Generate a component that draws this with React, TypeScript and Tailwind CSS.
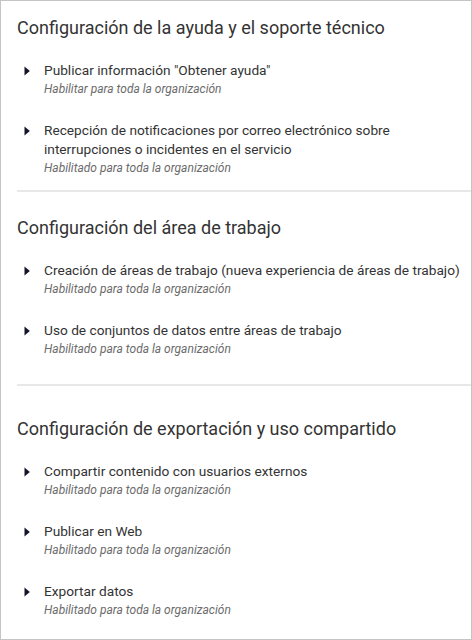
import React from 'react'

type Setting = {
  title: string
  status: string
}

type Section = {
  heading: string
  items: Setting[]
  className: string
}

const ENABLED = 'Habilitado para toda la organización'

const SECTIONS: Section[] = [
  {
    heading: 'Configuración de la ayuda y el soporte técnico',
    className: 'pt-[15px] pb-[12px]',
    items: [
      { title: 'Publicar información "Obtener ayuda"', status: 'Habilitar para toda la organización' },
      {
        title: 'Recepción de notificaciones por correo electrónico sobre interrupciones o incidentes en el servicio',
        status: ENABLED,
      },
    ],
  },
  {
    heading: 'Configuración del área de trabajo',
    className: 'pt-[24px] pb-[25px]',
    items: [
      { title: 'Creación de áreas de trabajo (nueva experiencia de áreas de trabajo)', status: ENABLED },
      { title: 'Uso de conjuntos de datos entre áreas de trabajo', status: ENABLED },
    ],
  },
  {
    heading: 'Configuración de exportación y uso compartido',
    className: 'pt-[31px] pb-[16px]',
    items: [
      { title: 'Compartir contenido con usuarios externos', status: ENABLED },
      { title: 'Publicar en Web', status: ENABLED },
      { title: 'Exportar datos', status: ENABLED },
    ],
  },
]

function Caret() {
  return (
    <svg width="6" height="10" viewBox="0 0 6 10" className="mt-[5px] flex-shrink-0">
      <path d="M0.5 0.5 L5.8 5 L0.5 9.5 Z" fill="#14142a" />
    </svg>
  )
}

function SettingRow({ item }: { item: Setting }) {
  return (
    <li className="flex gap-[14px] pl-[7px]">
      <Caret />
      <div className="min-w-0">
        <div className="text-[13.7px] leading-[19px] text-[#333]">{item.title}</div>
        <div className="text-[12px] leading-[19px] italic text-[#6b6b6b]">{item.status}</div>
      </div>
    </li>
  )
}

export default function App() {
  return (
    <div
      className="w-[472px] h-[640px] bg-white border border-[#c4c4c4] overflow-hidden"
      style={{ fontFamily: 'Roboto, "Open Sans", sans-serif' }}
    >
      <div className="pl-[16px]">
        {SECTIONS.map((s, i) => (
          <section key={s.heading} className={i < SECTIONS.length - 1 ? 'border-b-2 border-[#e8e8e8] ' + s.className : s.className}>
            <h2 className="text-[18px] leading-[24px] text-[#333] mb-[21px]">{s.heading}</h2>
            <ul className="flex flex-col gap-[22px]">
              {s.items.map((it) => (
                <SettingRow key={it.title} item={it} />
              ))}
            </ul>
          </section>
        ))}
      </div>
    </div>
  )
}
